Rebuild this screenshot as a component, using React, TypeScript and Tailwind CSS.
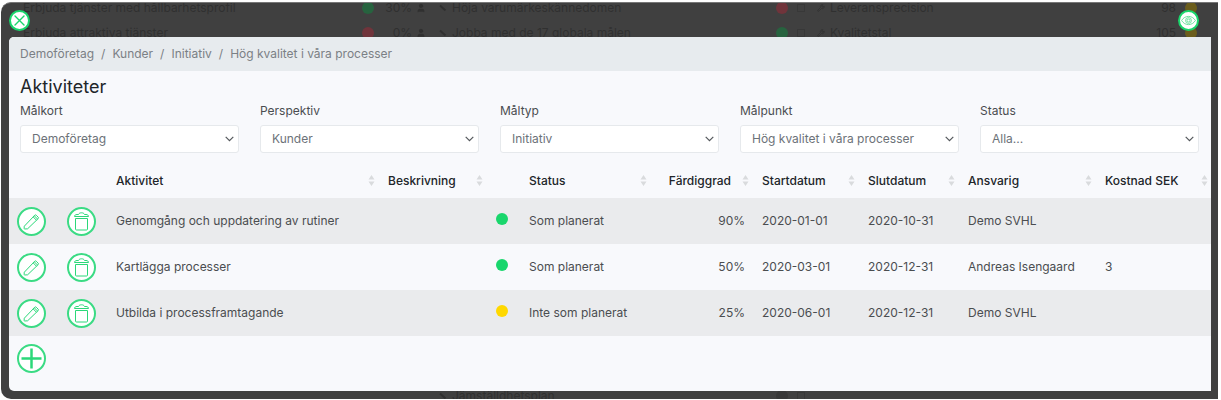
import React from 'react';
import { User, Wrench } from 'lucide-react';

interface Activity {
  name: string;
  status: string;
  color: string;
  progress: string;
  start: string;
  end: string;
  owner: string;
  cost: string;
}

const activities: Activity[] = [
  { name: 'Genomgång och uppdatering av rutiner', status: 'Som planerat', color: 'bg-[#19d66c]', progress: '90%', start: '2020-01-01', end: '2020-10-31', owner: 'Demo SVHL', cost: '' },
  { name: 'Kartlägga processer', status: 'Som planerat', color: 'bg-[#19d66c]', progress: '50%', start: '2020-03-01', end: '2020-12-31', owner: 'Andreas Isengaard', cost: '3' },
  { name: 'Utbilda i processframtagande', status: 'Inte som planerat', color: 'bg-[#ffd800]', progress: '25%', start: '2020-06-01', end: '2020-12-31', owner: 'Demo SVHL', cost: '' },
];

const filters = [
  { id: 'malkort', label: 'Målkort', value: 'Demoföretag' },
  { id: 'perspektiv', label: 'Perspektiv', value: 'Kunder' },
  { id: 'maltyp', label: 'Måltyp', value: 'Initiativ' },
  { id: 'malpunkt', label: 'Målpunkt', value: 'Hög kvalitet i våra processer' },
  { id: 'status', label: 'Status', value: 'Alla...' },
];

const crumbs = ['Demoföretag', 'Kunder', 'Initiativ', 'Hög kvalitet i våra processer'];

const PencilIcon = () => (
  <svg width="17" height="17" viewBox="0 0 17 17" fill="none" stroke="currentColor" strokeWidth="1" strokeLinejoin="round" className="shrink-0">
    <path d="M1.3 13.2 11.8 2.2a1 1 0 0 1 1.400 0l2 2a1 1 0 0 1 0 1.400L4.600 15.800l-2.900.2a.6.6 0 0 1-.6-.6z" />
    <path d="M10.200 3.900l3.300 3.400M11.300 2.800l3.300 3.300" />
  </svg>
);

const TrashIcon = () => (
  <svg width="17" height="19" viewBox="0 0 17 19" fill="none" stroke="currentColor" strokeWidth="1" strokeLinejoin="round" className="shrink-0">
    <path d="M1.500 4.500c0-1.300 1-2 2.500-2h1.500C6 1.300 7 .8 8.500.8s2.500.5 3 1.700H13c1.500 0 2.500.7 2.500 2z" />
    <path d="M2.500 6.500h12V17a1 1 0 0 1-1 1h-10a1 1 0 0 1-1-1z" />
  </svg>
);

const EyeIcon = () => (
  <svg width="15" height="11" viewBox="0 0 15 11" fill="none" stroke="currentColor" strokeWidth="0.8" className="shrink-0">
    <path d="M.6 5.500C4 0 11 0 14.400 5.500 11 11 4 11 .6 5.500z" />
    <circle cx="7.500" cy="5.500" r="2.900" />
    <circle cx="7.500" cy="5.500" r="1.500" />
  </svg>
);

const SortIcon = () => (
  <svg width="7" height="11" viewBox="0 0 7 11" fill="#d9dbdd" className="shrink-0">
    <path d="M3.500 0 6.500 4.500h-6zM3.500 11l3-4.500h-6z" />
  </svg>
);

const CircleButton: React.FC<{ label: string; children: React.ReactNode }> = ({ label, children }) => (
  <button
    type="button"
    aria-label={label}
    className="flex size-[29px] items-center justify-center rounded-full border-2 border-[#3bdb84] bg-white text-[#2bd879]"
  >
    {children}
  </button>
);

const SortHeader: React.FC<{ title: string; right?: boolean }> = ({ title, right }) => (
  <th className="p-0 font-medium">
    <button
      type="button"
      className={`flex w-full items-center pr-[3px] pl-[10px] ${right ? 'justify-end gap-[11px]' : 'justify-between'}`}
    >
      {title}
      <SortIcon />
    </button>
  </th>
);

const LinkMark = () => (
  <svg width="8" height="8" viewBox="0 0 8 8" stroke="currentColor" strokeWidth="2" className="shrink-0">
    <path d="M1 1.500 6.500 6.500" />
  </svg>
);

interface BackdropRowProps {
  left?: string;
  leftDot?: string;
  percent?: string;
  middle: string;
  middleDot: string;
  right?: string;
  value?: string;
}

const BackdropRow: React.FC<BackdropRowProps> = ({ left, leftDot, percent, middle, middleDot, right, value }) => (
  <div className="grid h-[25px] grid-cols-[438px_378px_1fr] items-center">
    <div className="flex items-center pl-[22px]">
      {left && (
        <>
          <span className="flex-1">{left}</span>
          <span className={`size-3 rounded-full ${leftDot}`} />
          <span className="w-[38px] text-right">{percent}</span>
          <User size={10} fill="currentColor" className="mr-[13px] ml-1" />
        </>
      )}
    </div>
    <div className="flex items-center gap-[5px]">
      <LinkMark />
      <span className="flex-1">{middle}</span>
      <span className={`size-3 rounded-full ${middleDot}`} />
      <span className="mr-3 ml-1 size-2 border border-[#383838]" />
    </div>
    <div className="flex items-center gap-[5px] pr-[21px]">
      {right && (
        <>
          <Wrench size={8} />
          <span className="flex-1">{right}</span>
          <span>{value}</span>
          <span className="ml-1 size-3 rounded-full bg-[#6b5d1c]" />
        </>
      )}
    </div>
  </div>
);

export default function App() {
  return (
    <div className="bg-white pt-[2px] pr-[3px] pl-px font-['Inter','Liberation_Sans',sans-serif] text-[12px] leading-4 text-[#4a4d50]">
      <div className="relative overflow-hidden rounded-l-[10px] border-t border-[#777777] bg-[#404040] pr-[7px] pb-2 pl-2">
        {/* Dimmed page behind the dialog */}
        <div aria-hidden="true" className="absolute inset-0 flex flex-col justify-between overflow-hidden text-[#303030]">
          <div className="-mt-2">
            <BackdropRow
              left="Erbjuda tjänster med hållbarhetsprofil"
              leftDot="bg-[#27633f]"
              percent="30%"
              middle="Höja varumärkeskännedomen"
              middleDot="bg-[#70343b]"
              right="Leveransprecision"
              value="98"
            />
            <BackdropRow
              left="Erbjuda attraktiva tjänster"
              leftDot="bg-[#70343b]"
              percent="0%"
              middle="Jobba med de 17 globala målen"
              middleDot="bg-[#27633f]"
              right="Kvalitetstal"
              value="105"
            />
          </div>
          <div className="-mb-[9px]">
            <BackdropRow middle="Jämställdhetsplan" middleDot="bg-[#383838]" />
          </div>
        </div>

        <div className="relative flex h-[34px] items-center justify-between pr-3">
          <button type="button" aria-label="Stäng" className="flex size-[21px] items-center justify-center rounded-full border-2 border-[#19d66c] bg-white text-[#19d66c]">
            <svg width="11" height="11" viewBox="0 0 11 11" stroke="currentColor" strokeWidth="1.400" strokeLinecap="round">
              <path d="M1 1l9 9M10 1l-9 9" />
            </svg>
          </button>
          <button type="button" aria-label="Visa" className="flex size-[21px] items-center justify-center rounded-full border-2 border-[#19d66c] bg-white text-[#4fdc8c]">
            <EyeIcon />
          </button>
        </div>

        <main className="relative overflow-hidden rounded-l-[5px] bg-[#f8f9fc] pb-[10px]">
          <nav aria-label="Sökväg" className="flex h-[34px] items-center gap-[7px] bg-[#e7ebee] pl-[11px] text-[#7b8085]">
            {crumbs.map((crumb, i) => (
              <React.Fragment key={crumb}>
                {i > 0 && <span>/</span>}
                <a href="#">{crumb}</a>
              </React.Fragment>
            ))}
          </nav>

          <h1 className="pl-[11px] text-[18px] leading-8 text-[#212529]">Aktiviteter</h1>

          <div className="grid grid-cols-5 gap-[21px] pr-3 pl-[11px]">
            {filters.map((f) => (
              <div key={f.id} className="flex flex-col gap-[6px]">
                <label htmlFor={f.id}>{f.label}</label>
                <div className="relative">
                  <select
                    id={f.id}
                    className="h-7 w-full appearance-none rounded-[3px] border border-[#e6e9ec] bg-white pr-5 pl-[11px] text-[#6c7278]"
                  >
                    <option>{f.value}</option>
                  </select>
                  <svg width="9" height="6" viewBox="0 0 9 6" fill="none" stroke="#54585c" strokeWidth="1.200" className="pointer-events-none absolute top-[11px] right-[5px]">
                    <path d="M.7.8 4.500 4.600 8.300.8" />
                  </svg>
                </div>
              </div>
            ))}
          </div>

          <table className="mt-[10px] w-full table-fixed border-collapse text-left">
            <colgroup>
              <col className="w-[50px]" />
              <col className="w-[47px]" />
              <col />
              <col className="w-[108px]" />
              <col className="w-[33px]" />
              <col className="w-[131px]" />
              <col className="w-[102px]" />
              <col className="w-[106px]" />
              <col className="w-[100px]" />
              <col className="w-[137px]" />
              <col className="w-[116px]" />
            </colgroup>
            <thead>
              <tr className="h-[35px] text-[#212529]">
                <th />
                <th />
                <SortHeader title="Aktivitet" />
                <SortHeader title="Beskrivning" />
                <th />
                <SortHeader title="Status" />
                <SortHeader title="Färdiggrad" right />
                <SortHeader title="Startdatum" />
                <SortHeader title="Slutdatum" />
                <SortHeader title="Ansvarig" />
                <SortHeader title="Kostnad SEK" />
              </tr>
            </thead>
            <tbody>
              {activities.map((a) => (
                <tr key={a.name} className="h-[46px] odd:bg-[#eaebed]">
                  <td className="p-0 pl-2">
                    <CircleButton label="Redigera"><PencilIcon /></CircleButton>
                  </td>
                  <td className="p-0 pl-2">
                    <CircleButton label="Ta bort"><TrashIcon /></CircleButton>
                  </td>
                  <td className="p-0 pl-[10px]">{a.name}</td>
                  <td />
                  <td className="p-0 pb-1 pl-[10px]">
                    <span className={`block size-3 rounded-full ${a.color}`} />
                  </td>
                  <td className="p-0 pl-[10px]">{a.status}</td>
                  <td className="p-0 pr-[7px] text-right">{a.progress}</td>
                  <td className="p-0 pl-[10px]">{a.start}</td>
                  <td className="p-0 pl-[10px]">{a.end}</td>
                  <td className="p-0 pl-[10px]">{a.owner}</td>
                  <td className="p-0 pl-[10px]">{a.cost}</td>
                </tr>
              ))}
            </tbody>
          </table>

          <div className="flex h-[45px] items-center pl-2">
            <CircleButton label="Lägg till">
              <svg width="21" height="21" viewBox="0 0 21 21" stroke="currentColor" strokeWidth="2.500" className="shrink-0">
                <path d="M10.500 .5v20M.5 10.500h20" />
              </svg>
            </CircleButton>
          </div>
        </main>
      </div>
    </div>
  );
}
